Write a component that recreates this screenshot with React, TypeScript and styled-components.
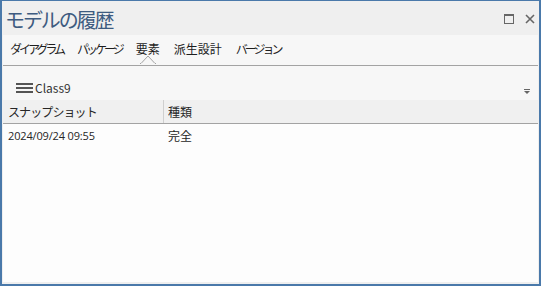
import styled, { createGlobalStyle } from "styled-components";

const GlobalStyle = createGlobalStyle`
  html, body {
    margin: 0;
    padding: 0;
    background: #ffffff;
  }
  body {
    font-family: "Noto Sans CJK JP", "Noto Sans", "Liberation Sans", sans-serif;
  }
`;

const Window = styled.div`
  width: 541px;
  height: 286px;
  box-sizing: border-box;
  border: 2px solid #4a79aa;
  border-top-width: 1px;
  background-color: #efefef;
  display: flex;
  flex-direction: column;
  padding: 0 1px 2px 1px;
  overflow: hidden;
`;

const TitleBar = styled.div`
  height: 34px;
  display: flex;
  align-items: center;
  padding: 0 0 0 2px;
  flex-shrink: 0;
`;

const Title = styled.h1`
  margin: 0;
  flex: 1;
  font-size: 20px;
  font-weight: 400;
  color: #3d5b80;
  letter-spacing: -2.1px;
  padding-top: 2px;
`;

const WindowButtons = styled.div`
  display: flex;
  align-items: center;
  gap: 11px;
  padding-right: 3px;
  padding-top: 2px;
`;

const IconButton = styled.span`
  display: flex;
  width: 10px;
  height: 10px;
`;

const Panel = styled.div`
  flex: 1;
  display: flex;
  flex-direction: column;
  background-color: #fdfdfd;
`;

const TabBar = styled.div`
  height: 31px;
  background-color: #f7f7f7;
  border-bottom: 1px solid #a3a3a3;
  display: flex;
  align-items: center;
  gap: 14px;
  padding: 0 0 4px 7px;
  box-sizing: border-box;
  flex-shrink: 0;
`;

const Tab = styled.span<{ $kana?: boolean }>`
  position: relative;
  font-size: 12px;
  color: #1e1e1e;
  white-space: nowrap;
  letter-spacing: ${({ $kana }) => ($kana ? "-3px" : "0")};
`;

const Notch = styled.svg`
  position: absolute;
  left: 50%;
  margin-left: -8px;
  top: 14px;
  width: 16px;
  height: 10px;
`;

const Toolbar = styled.div`
  height: 34px;
  background-color: #f7f7f7;
  display: flex;
  align-items: center;
  padding: 9px 8px 0 13px;
  box-sizing: border-box;
  flex-shrink: 0;
`;

const ClassName = styled.span`
  flex: 1;
  font-size: 12px;
  color: #333333;
  margin-left: 2px;
`;

const ArrowWrap = styled.span`
  display: flex;
  margin-top: 8px;
`;

const HeaderRow = styled.div`
  height: 24px;
  background-color: #f0f0f0;
  border-bottom: 1px solid #a3a3a3;
  display: grid;
  grid-template-columns: 160px 1fr;
  box-sizing: border-box;
  flex-shrink: 0;
`;

const HeaderCell = styled.div<{ $divider?: boolean }>`
  display: flex;
  align-items: center;
  padding-left: ${({ $divider }) => ($divider ? "4px" : "5px")};
  font-size: 12px;
  color: #262626;
  letter-spacing: ${({ $divider }) => ($divider ? "0" : "-0.9px")};
  border-left: ${({ $divider }) => ($divider ? "1px solid #cfcfcf" : "none")};
`;

const DataRow = styled.div`
  height: 22px;
  display: grid;
  grid-template-columns: 160px 1fr;
`;

const DataCell = styled.div<{ $small?: boolean }>`
  display: flex;
  align-items: center;
  padding-left: 5px;
  font-size: ${({ $small }) => ($small ? "11px" : "12px")};
  color: #262626;
  font-family: ${({ $small }) =>
    $small ? '"Open Sans", "Noto Sans", sans-serif' : "inherit"};
  letter-spacing: ${({ $small }) => ($small ? "-0.15px" : "0")};
`;

const Hamburger = () => (
  <svg width="17" height="10" viewBox="0 0 17 10">
    <rect x="0" y="0" width="17" height="2" fill="#555" />
    <rect x="0" y="4" width="17" height="2" fill="#555" />
    <rect x="0" y="8" width="17" height="2" fill="#555" />
  </svg>
);

const DropArrow = () => (
  <svg width="6" height="5" viewBox="0 0 6 5">
    <rect x="0" y="0" width="6" height="1" fill="#666" />
    <path d="M0 2 H6 L3 5 Z" fill="#666" />
  </svg>
);

const tabs = [
  { label: "ダイアグラム", kana: true },
  { label: "パッケージ", kana: true },
  { label: "要素", kana: false },
  { label: "派生設計", kana: false },
  { label: "バージョン", kana: true },
];

export default function App() {
  return (
    <>
      <GlobalStyle />
      <Window>
        <TitleBar>
          <Title>モデルの履歴</Title>
          <WindowButtons>
            <IconButton>
              <svg width="10" height="10" viewBox="0 0 10 10">
                <rect x="0.5" y="0.5" width="9" height="9" fill="none" stroke="#666" />
                <rect x="0" y="0" width="10" height="2" fill="#666" />
              </svg>
            </IconButton>
            <IconButton>
              <svg width="10" height="10" viewBox="0 0 10 10">
                <path d="M1 1 L9 9 M9 1 L1 9" stroke="#666" strokeWidth="1.6" />
              </svg>
            </IconButton>
          </WindowButtons>
        </TitleBar>
        <Panel>
          <TabBar>
            {tabs.map((t) => (
              <Tab key={t.label} $kana={t.kana}>
                {t.label}
                {t.label === "要素" && (
                  <Notch viewBox="0 0 16 10">
                    <path d="M0 9.5 L1 9.5 L8 2 L15 9.5 L16 9.5" fill="#f7f7f7" stroke="#a3a3a3" />
                    <rect x="1" y="9.5" width="14" height="1" fill="#f7f7f7" />
                  </Notch>
                )}
              </Tab>
            ))}
          </TabBar>
          <Toolbar>
            <Hamburger />
            <ClassName>Class9</ClassName>
            <ArrowWrap>
              <DropArrow />
            </ArrowWrap>
          </Toolbar>
          <HeaderRow>
            <HeaderCell>スナップショット</HeaderCell>
            <HeaderCell $divider>種類</HeaderCell>
          </HeaderRow>
          <DataRow>
            <DataCell $small>2024/09/24 09:55</DataCell>
            <DataCell>完全</DataCell>
          </DataRow>
        </Panel>
      </Window>
    </>
  );
}
